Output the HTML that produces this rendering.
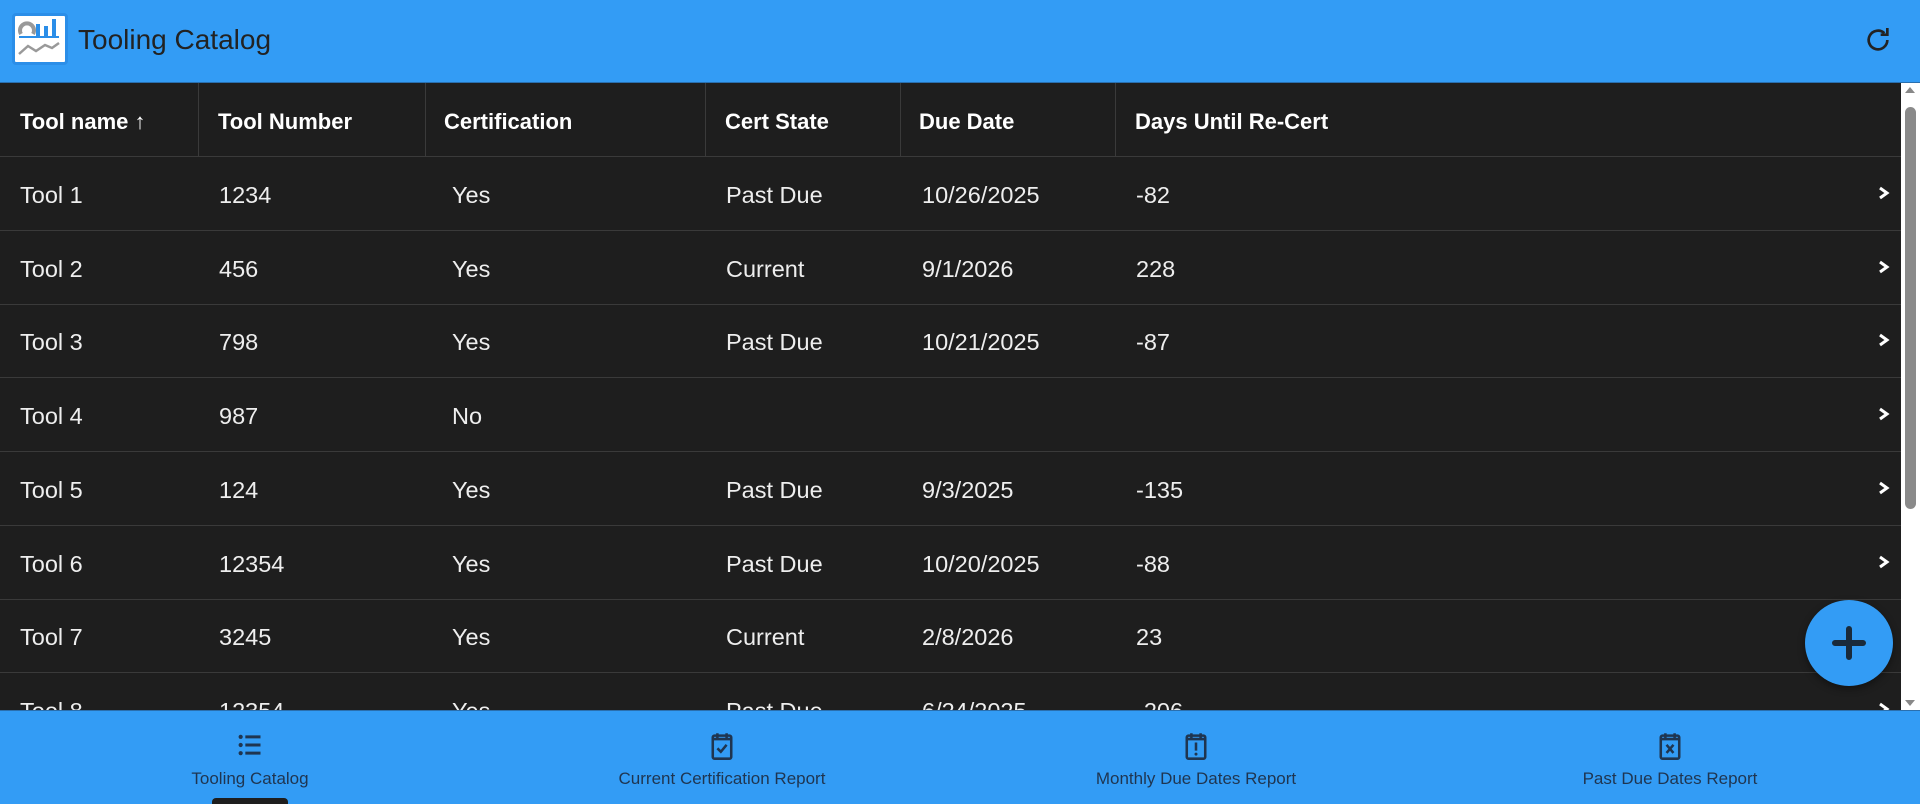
<!DOCTYPE html>
<html><head><meta charset="utf-8"><style>
*{box-sizing:border-box;margin:0;padding:0}
html,body{width:1920px;height:804px;overflow:hidden;background:#339cf5;font-family:"Liberation Sans",sans-serif;position:relative}
.hdr{position:absolute;left:0;top:0;width:1920px;height:83px;background:#339cf5;border-bottom:1px solid #2a6fae}
.hdr .t{position:absolute;left:78px;top:24px;font-size:28px;color:#222}
.logo{position:absolute;left:12px;top:13px;width:56px;height:52px;background:#fff;border:3px solid #2b8ee8;border-radius:4px}
.tbl{position:absolute;left:0;top:83px;width:1901px;height:627px;overflow:hidden;background:#1e1e1e}
.row{position:absolute;left:0;width:1901px;height:74px;border-bottom:1px solid #3a3a3a;color:#eee;font-size:23.5px}
.row span{position:absolute;top:25px}
.h span{font-weight:bold;font-size:22px;top:26px;color:#fff}
.vd{position:absolute;top:0;width:1px;height:74px;background:#3a3a3a}
.row svg.chev{position:absolute;left:1878px;top:29px}
.sb{position:absolute;left:1901px;top:83px;width:19px;height:627px;background:#fff}
.thumb{position:absolute;left:4px;top:24px;width:11px;height:402px;background:#8a8a8a;border-radius:6px}
.fab{position:absolute;left:1805px;top:600px;width:88px;height:86px;border-radius:50%;background:#339cf5;box-shadow:0 3px 8px rgba(0,0,0,.4)}
.nav{position:absolute;left:0;top:710px;width:1920px;height:94px;background:#339cf5;border-top:1px solid #2a6fae}
.ni{position:absolute;top:0;width:480px;text-align:center;color:#1f3550;font-size:17px}
.ni svg{position:absolute;top:20px;left:226px}
.ni div{position:absolute;top:58px;width:100%}
</style></head><body>
<div class="hdr">
 <div class="logo"><svg width="50" height="46" viewBox="0 0 50 46"><path d="M6 18a7 7 0 1 1 12 0" stroke="#999" stroke-width="4" fill="none"/><rect x="21" y="8" width="4" height="12" fill="#2b8ee8"/><rect x="29" y="10" width="4" height="10" fill="#2b8ee8"/><rect x="37" y="3" width="4" height="17" fill="#2b8ee8"/><rect x="4" y="20" width="40" height="2" fill="#2b8ee8"/><path d="M4 38l9-8 8 5 9-6 7 3 7-5" stroke="#999" stroke-width="2.5" fill="none"/></svg></div>
 <div class="t">Tooling Catalog</div>
 <svg style="position:absolute;left:1862px;top:24px" width="32" height="32" viewBox="0 0 24 24"><path d="M19 12a7 7 0 1 1-2.2-5.1" stroke="#222" stroke-width="2" fill="none"/><path d="M19 3v5h-5" stroke="#222" stroke-width="2" fill="none"/></svg>
</div>
<div class="tbl">
 <div class="row h" style="top:0"><span style="left:20px">Tool name ↑</span><span style="left:218px">Tool Number</span><span style="left:444px">Certification</span><span style="left:725px">Cert State</span><span style="left:919px">Due Date</span><span style="left:1135px">Days Until Re-Cert</span>
 <i class="vd" style="left:198px"></i><i class="vd" style="left:425px"></i><i class="vd" style="left:705px"></i><i class="vd" style="left:900px"></i><i class="vd" style="left:1115px"></i></div>
 <div class="row" style="top:74px"><span style="left:20px">Tool 1</span><span style="left:219px">1234</span><span style="left:452px">Yes</span><span style="left:726px">Past Due</span><span style="left:922px">10/26/2025</span><span style="left:1136px">-82</span><svg class="chev" width="12" height="14" viewBox="0 0 12 14"><path d="M2 2l7 5-7 5" stroke="#fff" stroke-width="3" fill="none"/></svg></div>
 <div class="row" style="top:148px"><span style="left:20px">Tool 2</span><span style="left:219px">456</span><span style="left:452px">Yes</span><span style="left:726px">Current</span><span style="left:922px">9/1/2026</span><span style="left:1136px">228</span><svg class="chev" width="12" height="14" viewBox="0 0 12 14"><path d="M2 2l7 5-7 5" stroke="#fff" stroke-width="3" fill="none"/></svg></div>
 <div class="row" style="top:221px"><span style="left:20px">Tool 3</span><span style="left:219px">798</span><span style="left:452px">Yes</span><span style="left:726px">Past Due</span><span style="left:922px">10/21/2025</span><span style="left:1136px">-87</span><svg class="chev" width="12" height="14" viewBox="0 0 12 14"><path d="M2 2l7 5-7 5" stroke="#fff" stroke-width="3" fill="none"/></svg></div>
 <div class="row" style="top:295px"><span style="left:20px">Tool 4</span><span style="left:219px">987</span><span style="left:452px">No</span><svg class="chev" width="12" height="14" viewBox="0 0 12 14"><path d="M2 2l7 5-7 5" stroke="#fff" stroke-width="3" fill="none"/></svg></div>
 <div class="row" style="top:369px"><span style="left:20px">Tool 5</span><span style="left:219px">124</span><span style="left:452px">Yes</span><span style="left:726px">Past Due</span><span style="left:922px">9/3/2025</span><span style="left:1136px">-135</span><svg class="chev" width="12" height="14" viewBox="0 0 12 14"><path d="M2 2l7 5-7 5" stroke="#fff" stroke-width="3" fill="none"/></svg></div>
 <div class="row" style="top:443px"><span style="left:20px">Tool 6</span><span style="left:219px">12354</span><span style="left:452px">Yes</span><span style="left:726px">Past Due</span><span style="left:922px">10/20/2025</span><span style="left:1136px">-88</span><svg class="chev" width="12" height="14" viewBox="0 0 12 14"><path d="M2 2l7 5-7 5" stroke="#fff" stroke-width="3" fill="none"/></svg></div>
 <div class="row" style="top:516px"><span style="left:20px">Tool 7</span><span style="left:219px">3245</span><span style="left:452px">Yes</span><span style="left:726px">Current</span><span style="left:922px">2/8/2026</span><span style="left:1136px">23</span><svg class="chev" width="12" height="14" viewBox="0 0 12 14"><path d="M2 2l7 5-7 5" stroke="#fff" stroke-width="3" fill="none"/></svg></div>
 <div class="row" style="top:590px"><span style="left:20px">Tool 8</span><span style="left:219px">12354</span><span style="left:452px">Yes</span><span style="left:726px">Past Due</span><span style="left:922px">6/24/2025</span><span style="left:1136px">-206</span><svg class="chev" width="12" height="14" viewBox="0 0 12 14"><path d="M2 2l7 5-7 5" stroke="#fff" stroke-width="3" fill="none"/></svg></div>
</div>
<div class="sb"><div style="position:absolute;left:4px;top:4px;border:5px solid transparent;border-bottom:6px solid #888;border-top:0"></div><div class="thumb"></div><div style="position:absolute;left:4px;bottom:4px;border:5px solid transparent;border-top:6px solid #888;border-bottom:0"></div></div>
<div class="fab"><svg style="position:absolute;left:26px;top:25px" width="36" height="36" viewBox="0 0 36 36"><path d="M18 4v28M4 18h28" stroke="#1a2a3a" stroke-width="6" stroke-linecap="round"/></svg></div>
<div class="nav">
 <div class="ni" style="left:10px"><svg width="28" height="28" viewBox="0 0 24 24"><circle cx="4" cy="5" r="1.8" fill="#1f3550"/><circle cx="4" cy="12" r="1.8" fill="#1f3550"/><circle cx="4" cy="19" r="1.8" fill="#1f3550"/><path d="M8 5h13M8 12h13M8 19h13" stroke="#1f3550" stroke-width="2.6"/></svg><div>Tooling Catalog</div></div>
 <div class="ni" style="left:482px"><svg width="28" height="30" viewBox="0 0 24 26"><rect x="4" y="4" width="16" height="20" rx="1.5" stroke="#1f3550" stroke-width="2.2" fill="none"/><path d="M8 2v4M16 2v4M4 7h16" stroke="#1f3550" stroke-width="2.2"/><path d="M8 15l3 3 5-6" stroke="#1f3550" stroke-width="2.2" fill="none"/></svg><div>Current Certification Report</div></div>
 <div class="ni" style="left:956px"><svg width="28" height="30" viewBox="0 0 24 26"><rect x="4" y="4" width="16" height="20" rx="1.5" stroke="#1f3550" stroke-width="2.2" fill="none"/><path d="M8 2v4M16 2v4M4 7h16M12 10v7" stroke="#1f3550" stroke-width="2.2"/><circle cx="12" cy="20" r="1.3" fill="#1f3550"/></svg><div>Monthly Due Dates Report</div></div>
 <div class="ni" style="left:1430px"><svg width="28" height="30" viewBox="0 0 24 26"><rect x="4" y="4" width="16" height="20" rx="1.5" stroke="#1f3550" stroke-width="2.2" fill="none"/><path d="M8 2v4M16 2v4M4 7h16M9 12l6 7M15 12l-6 7" stroke="#1f3550" stroke-width="2.2"/></svg><div>Past Due Dates Report</div></div>
 <div style="position:absolute;left:212px;top:87px;width:76px;height:7px;background:#1e1e1e;border-radius:4px 4px 0 0"></div>
</div>
</body></html>
